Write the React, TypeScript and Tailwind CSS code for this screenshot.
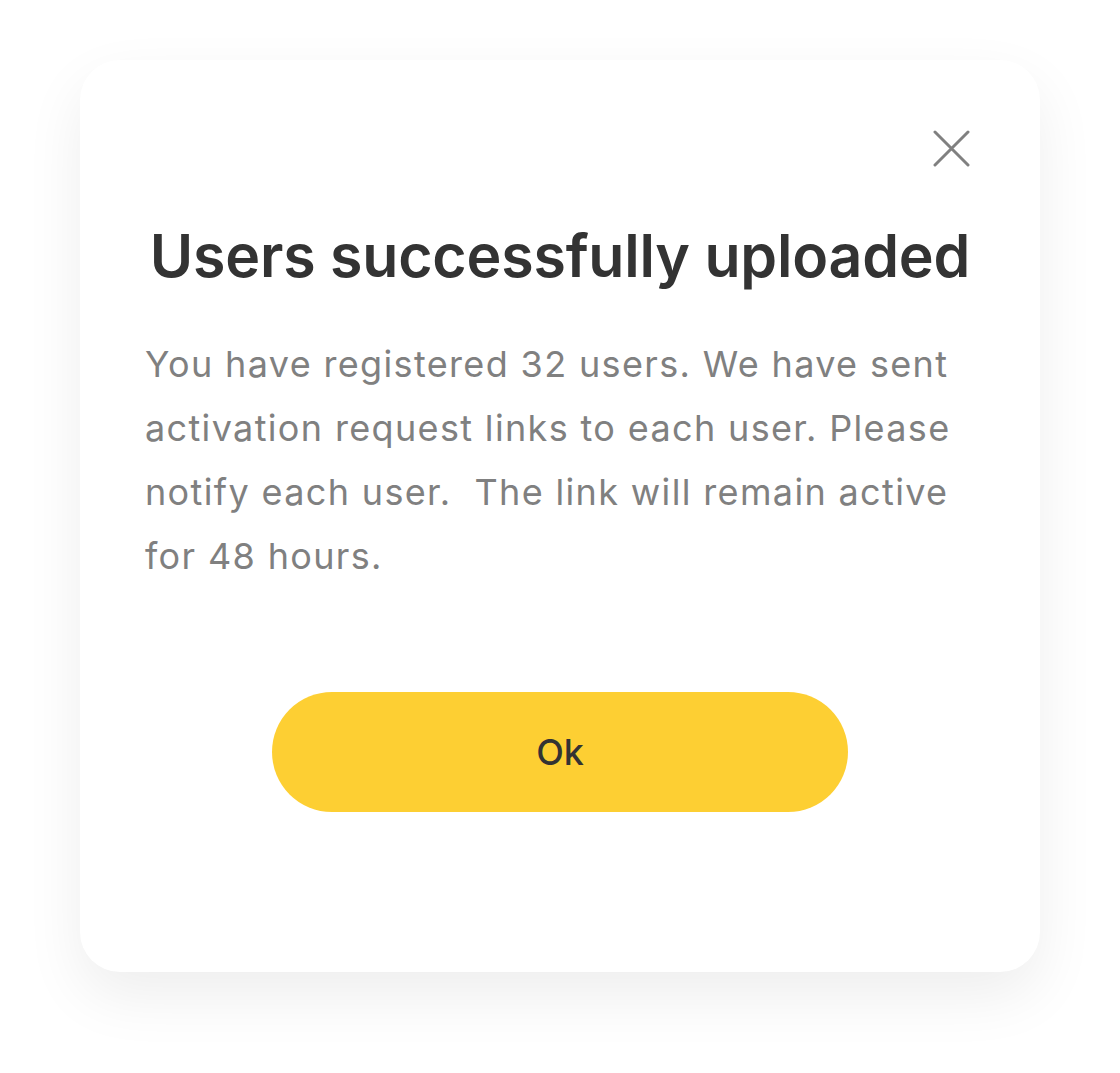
export default function App() {
    return (
        <div className="min-h-[1073px] w-full bg-white pt-[60px] px-[80px] font-['Inter',sans-serif]">
            {/* Modal card */}
            <div className="w-[960px] h-[912px] rounded-[40px] bg-white shadow-[0_24px_60px_rgba(0,0,0,0.07)] px-[65px] pt-[70px]">
                <div className="flex justify-end pr-[5px]">
                    <button className="text-[#808080]" aria-label="Close">
                        <svg width="37" height="37" viewBox="0 0 37 37" fill="none" stroke="currentColor" strokeWidth="3" strokeLinecap="round">
                            <path d="M2 2L35 35M35 2L2 35" />
                        </svg>
                    </button>
                </div>

                <h1 className="mt-[57px] text-center text-[59px] leading-[64px] font-semibold text-[#333333] tracking-[-0.2px]">
                    Users successfully uploaded
                </h1>

                <p className="mt-[44px] text-[36px] leading-[64px] tracking-[1.35px] text-[#808080]">
                    You have registered 32 users. We have sent<br />
                    activation request links to each user. Please<br />
                    notify each user.&nbsp; The link will remain active<br />
                    for 48 hours.
                </p>

                <div className="mt-[104px] flex justify-center">
                    <button className="w-[576px] h-[120px] rounded-full bg-[#FDCF33] text-[36px] font-medium text-[#333333]">
                        Ok
                    </button>
                </div>
            </div>
        </div>
    );
}
